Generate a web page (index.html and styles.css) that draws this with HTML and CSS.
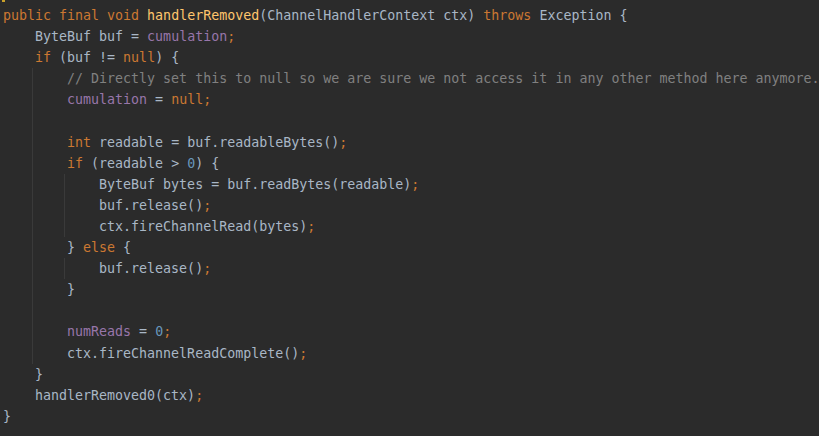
FILE: index.html
```html
<!DOCTYPE html>
<html>
<head>
<meta charset="utf-8">
<link rel="stylesheet" href="styles.css">
</head>
<body>
<div class="editor">
<div class="marker"></div>
<div class="code">
<div class="ln"><span class="k">public final void </span><span class="m">handlerRemoved</span>(ChannelHandlerContext ctx) <span class="k">throws </span>Exception {</div>
<div class="ln">    ByteBuf buf = <span class="f">cumulation</span><span class="k">;</span></div>
<div class="ln">    <span class="k">if </span>(buf != <span class="k">null</span>) {</div>
<div class="g1">
<div class="ln">        <span class="c">// Directly set this to null so we are sure we not access it in any other method here anymore.</span></div>
<div class="ln">        <span class="f">cumulation</span> = <span class="k">null;</span></div>
<div class="ln"> </div>
<div class="ln">        <span class="k">int </span>readable = buf.readableBytes()<span class="k">;</span></div>
<div class="ln">        <span class="k">if </span>(readable &gt; <span class="n">0</span>) {</div>
<div class="g2">
<div class="ln">            ByteBuf bytes = buf.readBytes(readable)<span class="k">;</span></div>
<div class="ln">            buf.release()<span class="k">;</span></div>
<div class="ln">            ctx.fireChannelRead(bytes)<span class="k">;</span></div>
</div>
<div class="ln">        } <span class="k">else </span>{</div>
<div class="g2">
<div class="ln">            buf.release()<span class="k">;</span></div>
</div>
<div class="ln">        }</div>
<div class="ln"> </div>
<div class="ln">        <span class="f">numReads</span> = <span class="n">0</span><span class="k">;</span></div>
<div class="ln">        ctx.fireChannelReadComplete()<span class="k">;</span></div>
</div>
<div class="ln">    }</div>
<div class="ln">    handlerRemoved0(ctx)<span class="k">;</span></div>
<div class="ln">}</div>
</div>
</div>
</body>
</html>
```

FILE: styles.css
```css
html, body {
  margin: 0;
  padding: 0;
  background: #2b2b2b;
}
.editor {
  position: relative;
  width: 819px;
  height: 436px;
  overflow: hidden;
  background: #2b2b2b;
}
.marker {
  position: absolute;
  left: 2px;
  top: 0;
  width: 3px;
  height: 2px;
  background: #c9a02a;
}
.code {
  padding: 5px 0 0 3px;
  font-family: "DejaVu Sans Mono", monospace;
  font-size: 13.3px;
  line-height: 21.1px;
  color: #a9b7c6;
}
.ln {
  white-space: pre;
  height: 21.1px;
}
.g1 {
  background: linear-gradient(#3a3a3a, #3a3a3a) no-repeat 29px 0 / 1px 100%;
}
.g2 {
  background: linear-gradient(#3a3a3a, #3a3a3a) no-repeat 61px 0 / 1px 100%;
}
.k { color: #cc7832; }
.m { color: #ffc66d; }
.f { color: #9876aa; }
.c { color: #808080; }
.n { color: #6897bb; }
```
